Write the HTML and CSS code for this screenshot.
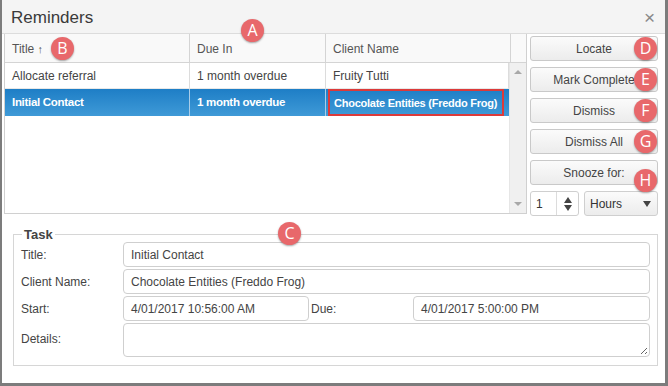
FILE: index.html
```html
<!DOCTYPE html>
<html lang="en">
<head>
    <meta charset="UTF-8">
    <title>Reminders</title>
    <link rel="stylesheet" href="styles.css">
</head>
<body>
    <div class="dialog">
        <div class="titlebar">
            <span class="title">Reminders</span>
            <span class="close">&times;</span>
        </div>

        <div class="main">
            <div class="grid">
                <div class="grid-head">
                    <div class="cell">Title <span class="sort">&#8593;</span></div>
                    <div class="cell">Due In</div>
                    <div class="cell">Client Name</div>
                    <div class="cell"></div>
                </div>
                <div class="grid-body">
                    <div class="rows">
                        <div class="row">
                            <div class="cell">Allocate referral</div>
                            <div class="cell">1 month overdue</div>
                            <div class="cell">Fruity Tutti</div>
                        </div>
                        <div class="row selected">
                            <div class="cell">Initial Contact</div>
                            <div class="cell">1 month overdue</div>
                            <div class="cell"><span class="outlined">Chocolate Entities (Freddo Frog)</span></div>
                        </div>
                    </div>
                    <div class="vscroll">
                        <span class="arrow up"></span>
                        <span class="arrow down"></span>
                    </div>
                </div>
            </div>

            <div class="actions">
                <button class="btn">Locate</button>
                <button class="btn">Mark Complete</button>
                <button class="btn">Dismiss</button>
                <button class="btn">Dismiss All</button>
                <button class="btn">Snooze for:</button>
                <div class="snooze">
                    <div class="spinner">
                        <span class="spin-value">1</span>
                        <span class="spin-btns">
                            <span class="tri up"></span>
                            <span class="tri down"></span>
                        </span>
                    </div>
                    <div class="select">
                        <span>Hours</span>
                        <span class="tri down"></span>
                    </div>
                </div>
            </div>
        </div>

        <fieldset class="task">
            <legend>Task</legend>
            <div class="form-row">
                <label>Title:</label>
                <div class="input">Initial Contact</div>
            </div>
            <div class="form-row">
                <label>Client Name:</label>
                <div class="input">Chocolate Entities (Freddo Frog)</div>
            </div>
            <div class="form-row">
                <label>Start:</label>
                <div class="input date">4/01/2017 10:56:00 AM</div>
                <label class="due-label">Due:</label>
                <div class="input">4/01/2017 5:00:00 PM</div>
            </div>
            <div class="form-row details">
                <label>Details:</label>
                <div class="input textarea"><span class="grip"></span></div>
            </div>
        </fieldset>

        <!-- annotation markers -->
        <span class="marker" style="left: 239px; top: 19px;">A</span>
        <span class="marker" style="left: 49px; top: 37px;">B</span>
        <span class="marker" style="left: 276px; top: 222px;">C</span>
        <span class="marker" style="left: 632px; top: 37px;">D</span>
        <span class="marker" style="left: 632px; top: 68px;">E</span>
        <span class="marker" style="left: 632px; top: 99px;">F</span>
        <span class="marker" style="left: 632px; top: 130px;">G</span>
        <span class="marker" style="left: 632px; top: 169px;">H</span>
    </div>
</body>
</html>
```

FILE: styles.css
```css
* {
    margin: 0;
    padding: 0;
    box-sizing: border-box;
}
body {
    font-family: "Liberation Sans", Arial, sans-serif;
    font-size: 12px;
    color: #444;
    background-color: #7c7c7c;
    width: 668px;
    height: 386px;
    overflow: hidden;
}
.dialog {
    position: relative;
    width: 663px;
    height: 383px;
    margin-left: 2px;
    background-color: #fff;
    display: flex;
    flex-direction: column;
}
.titlebar {
    height: 34px;
    flex-shrink: 0;
    background-color: #f4f4f4;
    border-bottom: 1px solid #dcdcdc;
    display: flex;
    align-items: center;
    justify-content: space-between;
    padding: 3px 10px 0 9px;
}
.title {
    font-size: 17px;
    color: #3a3a3a;
}
.close {
    font-size: 19px;
    color: #888;
}
.main {
    display: flex;
    gap: 3px;
    padding-left: 2px;
    height: 180px;
}
.grid {
    width: 523px;
    height: 180px;
    border: 1px solid #d0d0d0;
    border-top: none;
    display: flex;
    flex-direction: column;
}
.grid-head {
    display: grid;
    grid-template-columns: 185px 136px 185px 1fr;
    height: 29px;
    border-bottom: 1px solid #d4d4d4;
    background-color: #f9f9f9;
}
.grid-head .cell {
    border-right: 1px solid #d4d4d4;
    padding: 2px 0 0 7px;
    line-height: 26px;
    color: #555;
}
.grid-head .cell:last-child {
    border-right: none;
}
.sort {
    font-size: 11px;
    color: #555;
}
.grid-body {
    flex: 1;
    display: flex;
}
.rows {
    flex: 1;
    min-width: 0;
}
.row {
    display: grid;
    grid-template-columns: 185px 136px minmax(0, 1fr);
    height: 26px;
}
.row .cell {
    border-right: 1px solid #dcdcdc;
    padding: 2px 0 0 7px;
    line-height: 23px;
    white-space: nowrap;
    overflow: hidden;
}
.row:first-child .cell {
    border-bottom: 1px solid #e8e8e8;
}
.row.selected {
    height: 27px;
    background: linear-gradient(#1e7ec6, #3f9ad7);
    color: #fff;
    font-weight: bold;
    font-size: 11.5px;
    letter-spacing: -0.3px;
}
.row.selected .cell {
    border-right-color: #a9cde9;
}
.row.selected .cell:last-child {
    padding: 0 0 0 2px;
    border-right: none;
}
.outlined {
    display: block;
    border: 2px solid #dc3a3a;
    padding: 2px 0 0 4px;
    line-height: 20px;
    height: 27px;
    margin-right: 5px;
    font-size: 11px;
    letter-spacing: -0.25px;
}
.vscroll {
    width: 17px;
    background-color: #f0f0f0;
    border-left: 1px solid #e6e6e6;
    display: flex;
    flex-direction: column;
    justify-content: space-between;
    align-items: center;
    padding: 7px 0 7px;
}
.arrow {
    width: 0;
    height: 0;
    border-left: 4px solid transparent;
    border-right: 4px solid transparent;
}
.arrow.up {
    border-bottom: 4px solid #a8a8a8;
}
.arrow.down {
    border-top: 4px solid #a8a8a8;
}
.actions {
    width: 128px;
    padding-top: 2px;
    display: flex;
    flex-direction: column;
    gap: 6px;
}
.btn {
    height: 25px;
    flex-shrink: 0;
    font-family: inherit;
    font-size: 12px;
    color: #444;
    background: linear-gradient(#fbfbfb, #ececec);
    border: 1px solid #c9c9c9;
    border-radius: 3px;
}
.snooze {
    display: flex;
    justify-content: space-between;
}
.spinner {
    width: 49px;
    height: 25px;
    border: 1px solid #cfcfcf;
    border-radius: 3px;
    display: flex;
}
.spin-value {
    flex: 1;
    padding: 1px 0 0 5px;
    line-height: 22px;
    color: #333;
}
.spin-btns {
    width: 22px;
    border-left: 1px solid #dcdcdc;
    display: flex;
    flex-direction: column;
    justify-content: center;
    align-items: center;
    gap: 2px;
}
.tri {
    width: 0;
    height: 0;
    border-left: 4px solid transparent;
    border-right: 4px solid transparent;
}
.tri.up {
    border-bottom: 6px solid #444;
}
.tri.down {
    border-top: 6px solid #444;
}
.select {
    width: 74px;
    height: 25px;
    border: 1px solid #cfcfcf;
    border-radius: 3px;
    background: linear-gradient(#fbfbfb, #ececec);
    display: flex;
    align-items: center;
    justify-content: space-between;
    padding: 1px 6px 0 5px;
    color: #333;
}
.task {
    margin: 13px 7px 0 11px;
    border: 1px solid #d6d6d6;
    padding: 0 7px 8px 7px;
    display: flex;
    flex-direction: column;
    gap: 2px;
}
.task legend {
    font-weight: bold;
    font-size: 13px;
    color: #444;
    padding: 0 2px;
    margin-left: 1px;
}
.form-row {
    display: flex;
    align-items: center;
}
.form-row label {
    width: 102px;
    flex-shrink: 0;
    color: #444;
    padding-top: 1px;
}
.input {
    flex: 1;
    height: 25px;
    border: 1px solid #cfcfcf;
    border-radius: 4px;
    line-height: 22px;
    padding: 1px 0 0 7px;
    color: #444;
}
.input.date {
    flex: 0 0 186px;
}
.form-row .due-label {
    width: auto;
    flex: 0 0 104px;
    padding-left: 2px;
}
.details {
    align-items: flex-start;
}
.details label {
    padding-top: 9px;
}
.textarea {
    position: relative;
    height: 34px;
}
.grip {
    position: absolute;
    right: 2px;
    bottom: 2px;
    width: 6px;
    height: 6px;
    background: linear-gradient(135deg, transparent 45%, #666 45%, #666 55%, transparent 55%, transparent 75%, #666 75%, #666 85%, transparent 85%);
}
.marker {
    position: absolute;
    width: 23px;
    height: 23px;
    border-radius: 50%;
    background-color: #e8686b;
    box-shadow: 0 1px 2px rgba(0, 0, 0, 0.35);
    color: #fff;
    font-family: "Open Sans", sans-serif;
    font-size: 16px;
    line-height: 23px;
    text-align: center;
}
```
